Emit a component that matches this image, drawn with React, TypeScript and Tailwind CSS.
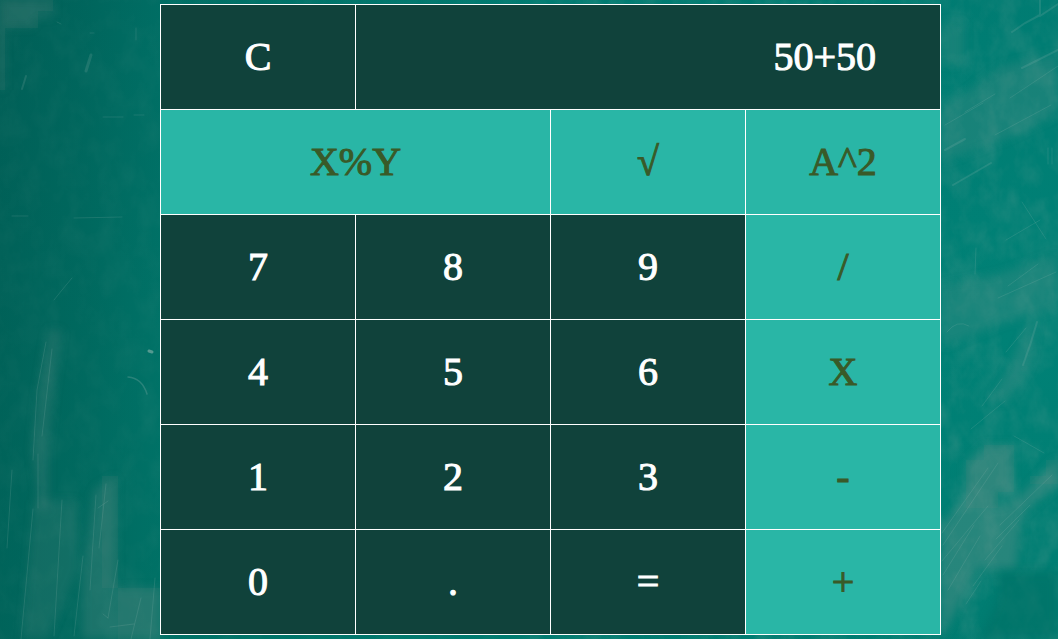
import { useState } from "react";

type Key = { label: string; kind: "number" | "operator"; wide?: boolean };

const keys: Key[] = [
  { label: "X%Y", kind: "operator", wide: true },
  { label: "√", kind: "operator" },
  { label: "A^2", kind: "operator" },
  { label: "7", kind: "number" },
  { label: "8", kind: "number" },
  { label: "9", kind: "number" },
  { label: "/", kind: "operator" },
  { label: "4", kind: "number" },
  { label: "5", kind: "number" },
  { label: "6", kind: "number" },
  { label: "X", kind: "operator" },
  { label: "1", kind: "number" },
  { label: "2", kind: "number" },
  { label: "3", kind: "number" },
  { label: "-", kind: "operator" },
  { label: "0", kind: "number" },
  { label: ".", kind: "number" },
  { label: "=", kind: "number" },
  { label: "+", kind: "operator" },
];

const insert: Record<string, string> = { "X%Y": "%", X: "*", "A^2": "^2" };

// Evaluates a chain of numbers and binary operators, products first.
function evaluate(expression: string): string {
  const tokens = expression
    .replace(/√(\d+\.?\d*)/g, (_, n) => String(Math.sqrt(Number(n))))
    .replace(/(\d+\.?\d*)\^2/g, (_, n) => String(Number(n) ** 2))
    .match(/\d+\.?\d*|[-+*/%]/g);
  if (!tokens) return "";
  const terms: number[] = [Number(tokens[0])];
  for (let i = 1; i + 1 < tokens.length; i += 2) {
    const value = Number(tokens[i + 1]);
    const last = terms.length - 1;
    if (tokens[i] === "+") terms.push(value);
    if (tokens[i] === "-") terms.push(-value);
    if (tokens[i] === "*") terms[last] *= value;
    if (tokens[i] === "/") terms[last] /= value;
    if (tokens[i] === "%") terms[last] %= value;
  }
  return String(terms.reduce((a, b) => a + b, 0));
}

function Chalkboard() {
  return (
    <svg
      aria-hidden="true"
      className="absolute inset-0 -z-10 h-full w-full"
      viewBox="0 0 1058 639"
      preserveAspectRatio="none"
    >
      <defs>
        <linearGradient id="board" x1="0" y1="0" x2="1" y2="0">
          <stop offset="0" stopColor="#005f56" />
          <stop offset="0.08" stopColor="#00675d" />
          <stop offset="0.16" stopColor="#007267" />
          <stop offset="0.5" stopColor="#008176" />
          <stop offset="1" stopColor="#008277" />
        </linearGradient>
        <linearGradient id="shade" x1="0" y1="0" x2="0" y2="1">
          <stop offset="0" stopColor="#005a58" stopOpacity="0.15" />
          <stop offset="0.5" stopColor="#00796d" stopOpacity="0.1" />
          <stop offset="1" stopColor="#006f64" stopOpacity="0.3" />
        </linearGradient>
        <filter id="soft" x="-30%" y="-30%" width="160%" height="160%">
          <feGaussianBlur stdDeviation="5" />
        </filter>
        <filter id="dust" x="0" y="0" width="100%" height="100%" colorInterpolationFilters="sRGB">
          <feTurbulence type="fractalNoise" baseFrequency="0.05 0.035" numOctaves="4" seed="8" />
          <feColorMatrix values="0 0 0 0 0.5  0 0 0 0 0.65  0 0 0 0 0.61  1 0.7 0 0 -0.68" />
        </filter>
      </defs>
      <rect width="1058" height="639" fill="url(#board)" />
      <rect width="1058" height="639" fill="url(#shade)" />
      <rect width="530" height="639" filter="url(#dust)" opacity="0.1" />
      <rect x="530" width="528" height="639" filter="url(#dust)" opacity="0.3" />

      <g fill="#8c9a94" filter="url(#soft)">
        <path d="M0 0h54v18H34v10H5v62H0z" opacity="0.12" />
        <path d="M48 330h14l-8 60-6 60v60h-8l-8-60 6-60z" opacity="0.18" />
        <path d="M94 490l22-14v112h44v51H82v-60z" opacity="0.2" />
        <path d="M34 500h44v70l-30 69H22z" opacity="0.13" />
        <path d="M942 110l60-44 56-12v60l-50 24-66 24z" opacity="0.17" />
        <path d="M942 285l60-12 56-20v56l-54 14-62 24z" opacity="0.17" />
        <path d="M942 22h22v42h-22z" opacity="0.16" />
        <path d="M990 400l20-35 16-37 12-8-8 45-22 37z" opacity="0.2" />
        <path d="M966 464l18-19h28v48h-16v15l22-10 40-40v26l-36 30-6 55h-38l-37 70V525l25-28z" opacity="0.28" />
      </g>
      <path d="M998 572h60v67h-78l18-40z" fill="#006f65" opacity="0.55" filter="url(#soft)" />
      <g fill="#6f8c83" opacity="0.11">
        <path d="M102 476h16v112h-16zM118 588h42v51h-42z" />
        <path d="M966 460h18v-15h30v47h-16v16h-32zM1030 476h16v-16h12v24h-28z" />
        <path d="M0 0h53v11H38v17H5v62H0z" />
      </g>

      <g stroke="#a5c1ba" strokeLinecap="round" fill="none">
        <g opacity="0.16">
          <path d="M91 55l-5 16" strokeWidth="3" />
          <path d="M26 76l-4 13" strokeWidth="2" />
          <path d="M57 22l4 2M90 33h4M136 28v12" />
          <path d="M103 117h20M134 115h10M12 216h16M74 218l48-1" />
          <path d="M72 278l-10 12-8 10" />
          <path d="M98 508l10-7M103 614l5 4M110 627l24-3" />
          <path d="M1040 0v14M1012 32l13-9 15-8M1058 4l-18 12" strokeWidth="2" />
          <path d="M1022 68l36-18M945 150l20-11M953 185l38-22" strokeWidth="2" />
          <path d="M1048 148v16M1052 148v16M1022 202l24 37M976 248l-1 26" />
          <path d="M947 332q10-13 22-6M1014 436l30 17" />
          <path d="M1037 322q-6 22-14 43" strokeWidth="2" />
        </g>
        <path d="M128 377q14 1 19 17" strokeWidth="1.5" opacity="0.25" />
        <path d="M149 351l3 1" strokeWidth="3" opacity="0.5" />
        <g opacity="0.16" strokeWidth="1">
          <path d="M942 533l46-65M943 545l55-82M942 561l46-55M943 575l31-50M948 590l32-54" />
          <path d="M1000 525l52-50M996 539l34-34M985 560l34-40M973 586l29-40M966 604l15-23" />
          <path d="M1006 240l34-20M1008 286l30-22M998 298l58-26M945 125l38-22M995 135l56-30" />
          <path d="M1010 98l48-32M965 112l30-18M1006 352l20-24M982 406l20-27M971 429l34-28" />
          <path d="M46 342l-9 48-4 70M52 349l-10 87M38 454v54M33 509l-6 65-6 65" />
          <path d="M96 495l-6 95M106 484l-7 64M83 556l-9 80M118 560l-10 58M62 500l-8 136" />
          <path d="M141 598l-10 41M155 578l-5 61M12 470l-5 78" />
        </g>
      </g>
    </svg>
  );
}

export default function App() {
  const [expression, setExpression] = useState("50+50");

  const press = (label: string) =>
    setExpression((current) =>
      label === "=" ? evaluate(current) : current + (insert[label] ?? label),
    );

  return (
    <main className="relative isolate min-h-screen overflow-hidden bg-[#00756b] pt-1 pr-[117px] pb-1 pl-40 font-['Liberation_Serif','Times_New_Roman',serif] text-[40px] leading-[48px] [-webkit-text-stroke:1px_currentColor]">
      <Chalkboard />
      <section
        aria-label="Calculator"
        className="grid auto-rows-[104px] grid-cols-4 gap-px border border-white bg-white"
      >
        <button
          type="button"
          onClick={() => setExpression("")}
          className="cursor-pointer bg-[#10423b] text-white"
        >
          C
        </button>
        <output className="col-span-3 flex items-center justify-end overflow-hidden bg-[#10423b] pr-16 text-white">
          {expression}
        </output>
        {keys.map(({ label, kind, wide }) => (
          <button
            key={label}
            type="button"
            onClick={() => press(label)}
            className={`cursor-pointer ${wide ? "col-span-2" : ""} ${
              kind === "operator" ? "bg-[#29b6a6] text-[#395a28]" : "bg-[#10423b] text-white"
            }`}
          >
            {label}
          </button>
        ))}
      </section>
    </main>
  );
}
